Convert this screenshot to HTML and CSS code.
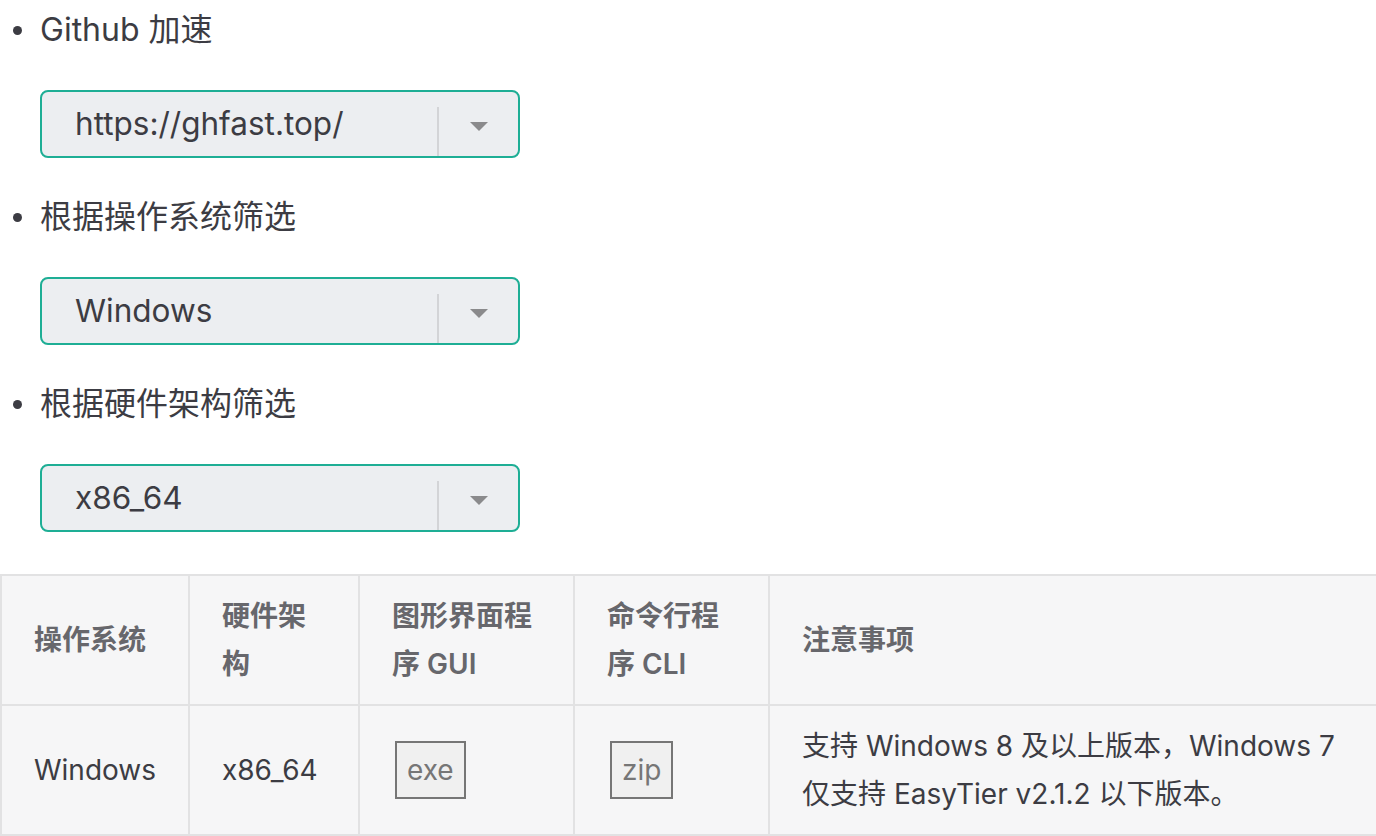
FILE: index.html
```html
<!DOCTYPE html>
<html lang="zh-CN">
<head>
<meta charset="utf-8">
<title>EasyTier 下载</title>
<link rel="stylesheet" href="styles.css">
</head>
<body>
<div class="page">
  <ul class="filters">
    <li class="filter">
      <div class="label">Github 加速</div>
      <div class="select">
        <span class="value">https://ghfast.top/</span>
        <span class="sep"></span>
        <span class="arrow"></span>
      </div>
    </li>
    <li class="filter">
      <div class="label">根据操作系统筛选</div>
      <div class="select">
        <span class="value">Windows</span>
        <span class="sep"></span>
        <span class="arrow"></span>
      </div>
    </li>
    <li class="filter">
      <div class="label">根据硬件架构筛选</div>
      <div class="select">
        <span class="value">x86_64</span>
        <span class="sep"></span>
        <span class="arrow"></span>
      </div>
    </li>
  </ul>
  <table class="downloads">
    <colgroup>
      <col class="c-os">
      <col class="c-arch">
      <col class="c-gui">
      <col class="c-cli">
      <col class="c-note">
    </colgroup>
    <thead>
      <tr>
        <th>操作系统</th>
        <th>硬件架构</th>
        <th>图形界面程序 GUI</th>
        <th>命令行程序 CLI</th>
        <th>注意事项</th>
      </tr>
    </thead>
    <tbody>
      <tr>
        <td>Windows</td>
        <td>x86_64</td>
        <td><button class="dl">exe</button></td>
        <td><button class="dl">zip</button></td>
        <td>支持 Windows 8 及以上版本，Windows 7 仅支持 EasyTier v2.1.2 以下版本。</td>
      </tr>
    </tbody>
  </table>
</div>
</body>
</html>
```
FILE: styles.css
```css
html, body {
  margin: 0;
  padding: 0;
  background: #ffffff;
}
body {
  font-family: Inter, "Noto Sans CJK SC", sans-serif;
  color: #3c3c43;
}
.page {
  padding-top: 2px;
}
.filters {
  list-style: none;
  margin: 0;
  padding: 0 0 0 40px;
  display: flex;
  flex-direction: column;
  gap: 31px;
}
.filter {
  display: flex;
  flex-direction: column;
  gap: 32px;
}
.label {
  position: relative;
  font-size: 32px;
  line-height: 56px;
  height: 56px;
}
.label::before {
  content: "";
  position: absolute;
  left: -27px;
  top: 24px;
  width: 9px;
  height: 9px;
  border-radius: 50%;
  background: #3c3c43;
}
.select {
  box-sizing: border-box;
  width: 480px;
  height: 68px;
  border: 2px solid #1eae95;
  border-radius: 8px;
  background: #eceef1;
  display: flex;
  align-items: stretch;
}
.value {
  flex: 1;
  padding-left: 33px;
  font-size: 31.5px;
  line-height: 64px;
  color: #3c3c43;
  white-space: nowrap;
}
.sep {
  width: 2px;
  margin-top: 15px;
  background: #d3d4d7;
}
.arrow {
  width: 79px;
  display: flex;
  align-items: center;
  justify-content: center;
}
.arrow::after {
  content: "";
  width: 0;
  height: 0;
  margin-top: 4px;
  border-left: 9px solid transparent;
  border-right: 9px solid transparent;
  border-top: 9px solid #8a8a8c;
}
.downloads {
  margin-top: 42px;
  border-collapse: collapse;
  table-layout: fixed;
  width: 1376px;
  font-size: 28px;
  line-height: 48px;
}
.c-os { width: 188px; }
.c-arch { width: 170px; }
.c-gui { width: 215px; }
.c-cli { width: 195px; }
.c-note { width: 608px; }
.downloads th,
.downloads td {
  border: 2px solid #e2e2e3;
  padding: 16px 32px;
  text-align: left;
  background: #f6f6f7;
}
.downloads th {
  font-weight: 600;
  color: #67676c;
}
.downloads td {
  color: #3c3c43;
}
.dl {
  margin-left: 3px;
  font-family: Inter, "Noto Sans CJK SC", sans-serif;
  font-size: 28px;
  line-height: 54px;
  height: 58px;
  padding: 0 10px;
  border: 2px solid #767676;
  background: #f0f0f0;
  color: #767676;
  vertical-align: middle;
}
```
